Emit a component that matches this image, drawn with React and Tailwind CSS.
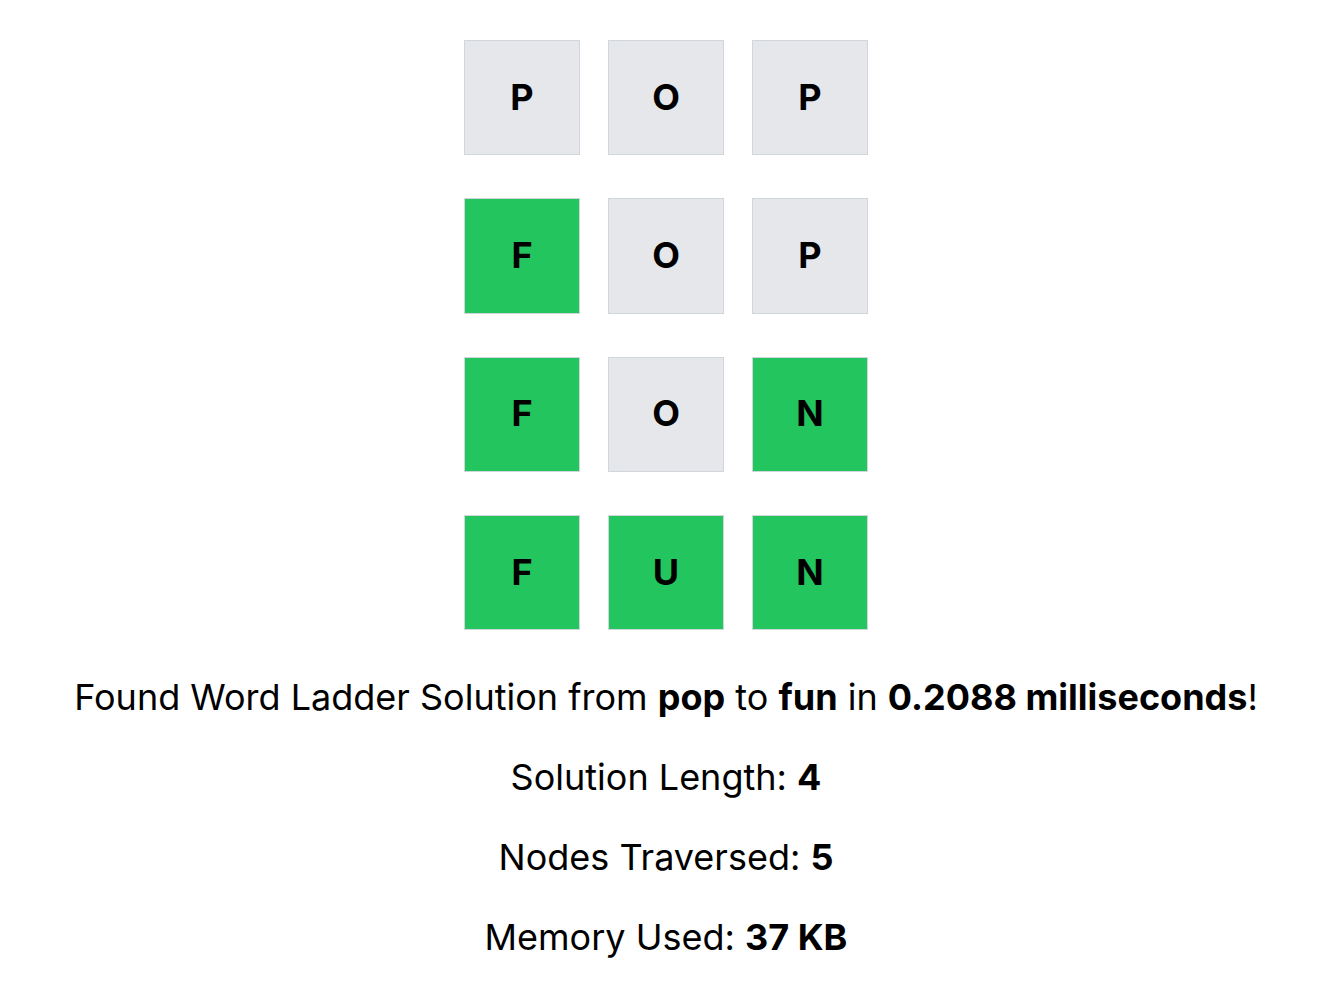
const ladder = ["POP", "FOP", "FON", "FUN"];
const target = "FUN";

function Tile({ letter, done }) {
  return (
    <div
      className={`flex h-[115.2px] w-[115.2px] items-center justify-center border border-gray-300 pb-[2px] text-[36px] font-bold text-black ${
        done ? "bg-[#22c55e]" : "bg-[#e5e7eb]"
      }`}
    >
      {letter}
    </div>
  );
}

export default function App() {
  return (
    <div
      className="flex min-h-screen w-full flex-col items-center bg-white pl-[11px] pt-[40px] text-black"
      style={{ fontFamily: "Inter, 'Noto Sans', sans-serif" }}
    >
      <div className="flex flex-col gap-[43.2px]">
        {ladder.map((word, i) => (
          <div key={i} className="flex gap-[28.8px]">
            {word.split("").map((ch, j) => (
              <Tile key={j} letter={ch} done={ch === target[j]} />
            ))}
          </div>
        ))}
      </div>

      <div className="mt-[46px] flex flex-col items-center gap-[36.8px] text-[36px] leading-[43.2px]">
        <p>
          Found Word Ladder Solution from <b>pop</b> to <b>fun</b> in{" "}
          <b>0.2088 milliseconds</b>!
        </p>
        <p>
          Solution Length: <b>4</b>
        </p>
        <p>
          Nodes Traversed: <b>5</b>
        </p>
        <p>
          Memory Used: <b>37 KB</b>
        </p>
      </div>
    </div>
  );
}
